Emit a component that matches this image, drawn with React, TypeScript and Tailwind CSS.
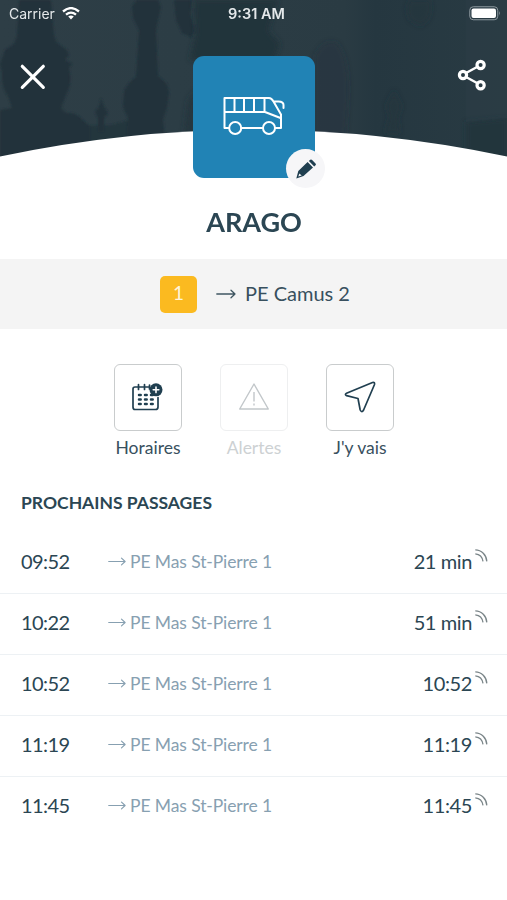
import React from 'react';

interface Passage {
  time: string;
  destination: string;
  wait: string;
}

const passages: Passage[] = [
  { time: '09:52', destination: 'PE Mas St-Pierre 1', wait: '21 min' },
  { time: '10:22', destination: 'PE Mas St-Pierre 1', wait: '51 min' },
  { time: '10:52', destination: 'PE Mas St-Pierre 1', wait: '10:52' },
  { time: '11:19', destination: 'PE Mas St-Pierre 1', wait: '11:19' },
  { time: '11:45', destination: 'PE Mas St-Pierre 1', wait: '11:45' },
];

// Dark street skyline, cut by the white curve at the bottom
const Backdrop = () => (
  <svg className="absolute top-0 left-0" width="507" height="160" viewBox="0 0 507 160">
    <defs>
      <linearGradient id="sky" x1="0" x2="1" y1="0" y2="0">
        <stop offset="0" stopColor="#2e3e46" />
        <stop offset="0.35" stopColor="#2c3d45" />
        <stop offset="0.68" stopColor="#2a3b43" />
        <stop offset="0.74" stopColor="#253740" />
        <stop offset="1" stopColor="#293b43" />
      </linearGradient>
      <filter id="soft"><feGaussianBlur stdDeviation="0.8" /></filter>
      <filter id="haze" x="-20%" width="140%"><feGaussianBlur stdDeviation="2.500" /></filter>
    </defs>
    <rect width="507" height="160" fill="url(#sky)" />
    <g filter="url(#soft)" fill="#21323b">
      <path d="M19 0H51L54 36 57 43 67 50 69 55 65 60 72 64 69 68Q73 84 66 95L61 108 66 113Q78 112 84 122L90 126V160H0V110L12 108 8 96Q1 88 2 72L0 64 5 50 14 44 17 36Z" />
      <path d="M137 0H158L161 7 158 20 156 30 158 76 167 84 169 92 167 108 163 119 165 140H126L128 118 123 107 124 91 130 82 136 77 139 30 133 18 132 6Z" />
      <path d="M101 98L104 107 108 113 104 118V132H98V118L95 112 99 107Z" />
      <path d="M174 0H192L190 14 195 30 191 37 182 33 176 20Z" />
      <path d="M66 118Q78 112 88 126L112 125 130 120V160H60Z" opacity=".8" />
    </g>
    <g filter="url(#haze)" fill="#21323b">
      <path d="M194 0H278L268 30 280 44 274 60H190L196 32Z" opacity=".85" />
      <path d="M188 100L196 90V150H182Z" opacity=".7" />
      <path d="M315 55Q326 36 338 44 350 60 348 100L345 150H315Z" opacity=".4" />
      <path d="M394 90L402 106 398 118 400 133H385L389 116 386 106ZM410 20Q404 8 410 0H430Q434 20 420 26Z" opacity=".45" />
      <path d="M466 122L507 118V160H466Z" opacity=".8" />
    </g>
    <path fill="#2c3e46" d="M466 0H507V118L466 122Z" opacity=".45" />
    <path fill="#fff" d="M0 156.500Q253.500 103 507 156.500V161H0Z" />
  </svg>
);

const StatusBar = () => (
  <div className="relative flex h-7 items-center justify-between pr-[6px] pl-[9px] font-['Inter','Liberation_Sans',sans-serif] text-[#e4e8ea]">
    <div className="flex w-[120px] items-center gap-[7px]">
      <span className="mb-[2px] text-[14px]">Carrier</span>
      <svg className="mb-[2px]" width="18" height="13" viewBox="0 0 18 13" fill="none" stroke="#fff" strokeWidth="2.300">
        <path d="M1 4.500Q9-2.300 17 4.500M4 7.700Q9 3.500 14 7.700" />
        <path d="M6.200 9.600Q9 7.300 11.800 9.600L9 12.600Z" fill="#fff" stroke="none" />
      </svg>
    </div>
    <span className="pl-[3px] text-[14.500px] font-semibold">9:31 AM</span>
    <div className="flex w-[120px] justify-end">
      <svg className="mb-[2px]" width="32" height="15" viewBox="0 0 32 15">
        <rect x=".75" y=".75" width="28" height="13" rx="3.500" fill="none" stroke="#8d989e" />
        <rect x="2.500" y="2.500" width="24.500" height="9.500" rx="2" fill="#fff" />
        <path d="M30 5Q31.800 7.200 30 9.500Z" fill="#8d989e" />
      </svg>
    </div>
  </div>
);

const BusIcon = () => (
  <svg width="62" height="40" viewBox="0 0 62 40" fill="none" stroke="#fff" strokeWidth="2" strokeLinecap="round" strokeLinejoin="round">
    <path d="M5.500 32H1.500V2H46Q48.500 2 50.500 5.500L58 18.500V32H52M18.500 32H39M1.500 16H42L57.500 22M11.500 2V15.500M21 2V15.500M31 2V15.500M41.500 2V15.500M51 5.500H55.500Q60.500 5.500 60.500 9V12" />
    <circle cx="12.200" cy="32" r="6" />
    <circle cx="46" cy="32" r="6" />
  </svg>
);

const PencilIcon = () => (
  <svg width="20" height="20" viewBox="0 0 20 20" fill="#203f50">
    <path d="M11.600 3L17 8.500 7.500 17 .3 19.600 2.300 12ZM3.400 14.500L2.300 17.600 5.700 16.500Z" fillRule="evenodd" />
    <path d="M12.900 2.100L14.200.8Q15.200 0 16.100.9L19.500 4.500Q20.300 5.400 19.500 6.200L18.200 7.500Z" />
  </svg>
);

const ArrowIcon = ({ className }: { className: string }) => (
  <svg className={className} viewBox="0 0 20 10" fill="none" stroke="currentColor" strokeWidth="1.300" strokeLinecap="round" strokeLinejoin="round">
    <path d="M.8 5H19M15 1.200L19 5 15 8.800" />
  </svg>
);

const CalendarIcon = () => (
  <svg className="mr-[2px] mb-[2px]" width="31" height="28" viewBox="0 0 31 28" fill="none" stroke="#203f50" strokeWidth="1.700" strokeLinecap="round">
    <path d="M17 4H3Q1 4 1 6V24Q1 26.500 3 26.500H23.500Q26 26.500 26 24V14.500M6.500 1.500V6.500M12.500 1.500V6.500M17.500 2V6" />
    <circle cx="24" cy="6.800" r="6.500" fill="#203f50" stroke="none" />
    <path d="M21.200 6.800H26.800M24 4V9.600" stroke="#fff" strokeWidth="1.600" />
    <path d="M7 12H8.700M13 12H14.700M19 12H20.700M7 16.500H8.700M13 16.500H14.700M19 16.500H20.700M7 21H8.700M13 21H14.700M19 21H20.700" strokeWidth="2.500" />
  </svg>
);

const AlertIcon = () => (
  <svg className="mb-[2px]" width="32" height="29" viewBox="0 0 32 29" fill="none" stroke="#c2c7ca" strokeWidth="1.400" strokeLinejoin="round">
    <path d="M16 2L30.300 27H1.700ZM16 10V19.500M16 21.500V23.500" />
  </svg>
);

const LocateIcon = () => (
  <svg className="mb-[2px]" width="32" height="32" viewBox="0 0 32 32" fill="none" stroke="#203f50" strokeWidth="1.700" strokeLinejoin="round">
    <path d="M28.500 1.500L2.500 12.300Q.3 13.400 2.600 14.700L14 17.500 16.200 29Q17.800 32.300 19.600 29L30.500 3.500Q31 .8 28.500 1.500Z" />
  </svg>
);

const LiveIcon = () => (
  <svg className="mb-[15px] ml-[3px]" width="13" height="13" viewBox="0 0 13 13" fill="none" stroke="#7a8588" strokeWidth="1.300">
    <path d="M.3.900C6.500.900 11.500 6 11.800 12.400M.3 4.800C4.600 5.200 7.400 8.200 8 12.400" />
  </svg>
);

const Action = ({ label, icon, disabled }: { label: string; icon: React.ReactNode; disabled?: boolean }) => (
  <div className="flex w-[68px] flex-col items-center">
    <button className={`flex h-[67px] w-[68px] items-center justify-center rounded-[6px] border-[1.500px] ${disabled ? 'border-[#eeeff0]' : 'border-[#c9cccd]'}`}>
      {icon}
    </button>
    <span className={`mt-1 text-[17.500px] leading-[25px] whitespace-nowrap ${disabled ? 'text-[#cdd1d3]' : 'text-[#38505e]'}`}>{label}</span>
  </div>
);

const App: React.FC = () => {
  return (
    <div className="h-[900px] w-[507px] overflow-hidden bg-white font-['Lato','Liberation_Sans',sans-serif] text-[#2b4653]">
      <header className="relative h-[259px]">
        <Backdrop />
        <StatusBar />
        <div className="relative flex h-[150px] items-start justify-between px-5 pt-7">
          <button className="mt-2 w-[30px]">
            <svg width="26" height="26" viewBox="0 0 26 26" stroke="#fff" strokeWidth="3.200" strokeLinecap="round">
              <path d="M2.300 2.300L23.300 23.300M23.300 2.300L2.300 23.300" />
            </svg>
          </button>
          <div className="relative flex size-[122px] justify-center rounded-[11px] bg-[#2183b5] pt-10">
            <BusIcon />
            <div className="absolute top-[93px] left-[93px] flex size-[39px] items-center justify-center rounded-full bg-[#f6f6f8] pl-[2px]">
              <PencilIcon />
            </div>
          </div>
          <button className="mt-[3px] w-[30px]">
            <svg width="30" height="32" viewBox="0 0 30 32" fill="none" stroke="#fff" strokeWidth="3.200">
              <path d="M9 14L20 8M9 18L20 24" strokeWidth="2.500" />
              <circle cx="6" cy="16" r="3.600" />
              <circle cx="23.600" cy="6" r="3.600" />
              <circle cx="23.600" cy="26.200" r="3.600" />
            </svg>
          </button>
        </div>
        <h1 className="relative mt-[26px] pl-[1px] text-center text-[27px] leading-9 font-bold">ARAGO</h1>
      </header>

      <div className="flex h-[70px] items-center bg-[#f4f4f4] pl-40">
        <span className="flex size-[37px] items-center justify-center rounded-[5px] bg-[#fbba20] pb-[1px] text-[19px] text-[#fff5db]">1</span>
        <ArrowIcon className="ml-[19px] h-[10px] w-5 text-[#3f5661]" />
        <span className="mb-[3px] ml-[9px] text-[20px] text-[#38505e]">PE Camus 2</span>
      </div>

      <div className="flex justify-center gap-[38px] pt-[35px] pl-[1px]">
        <Action label="Horaires" icon={<CalendarIcon />} />
        <Action label="Alertes" icon={<AlertIcon />} disabled />
        <Action label="J'y vais" icon={<LocateIcon />} />
      </div>

      <h2 className="mt-[31px] pl-[21px] text-[17.500px] leading-6 font-bold">PROCHAINS PASSAGES</h2>
      <ul className="mt-[18px]">
        {passages.map((p) => (
          <li key={p.time} className="flex h-[61px] items-center border-b border-[#edf1f4] pr-[19px] pl-[21px] last:border-transparent">
            <span className="mb-[5px] w-[87px] text-[20px] tracking-[-0.600px]">{p.time}</span>
            <ArrowIcon className="mb-[4px] h-[9px] w-[18px] text-[#87a0b1]" />
            <span className="mb-[2px] ml-1 flex-1 text-[17.500px] tracking-[-0.100px] text-[#87a0b1]">{p.destination}</span>
            <span className="mb-[4px] text-[20px] tracking-[-0.400px]">{p.wait}</span>
            <LiveIcon />
          </li>
        ))}
      </ul>
    </div>
  );
};

export default App;
